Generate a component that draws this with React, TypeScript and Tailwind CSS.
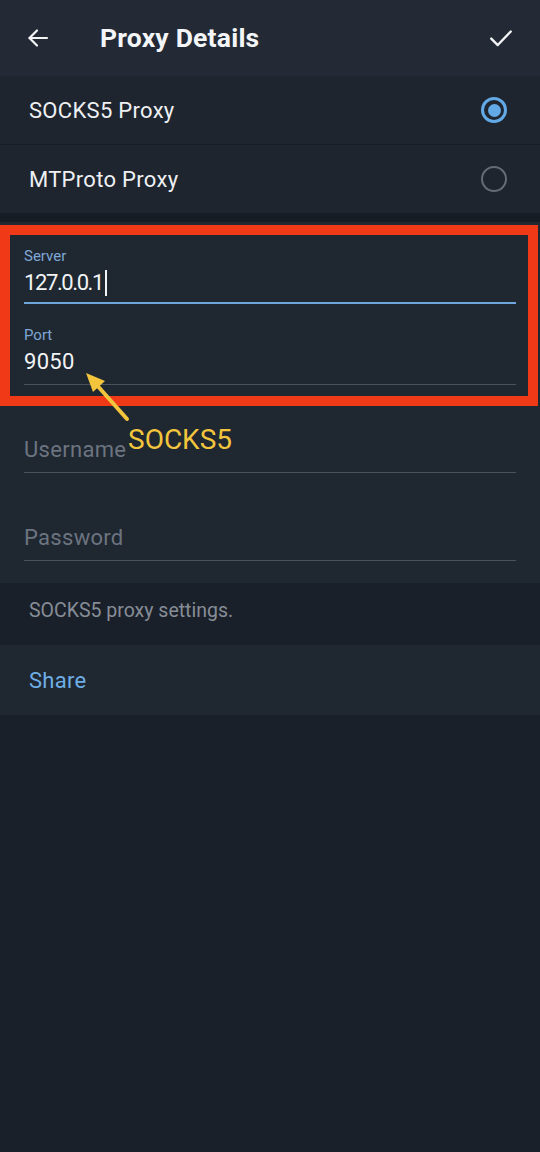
import React from "react";

function Radio({ checked }: { checked: boolean }) {
  if (checked) {
    return (
      <div className="w-[26px] h-[26px] rounded-full border-[3px] border-[#62a9e6] flex items-center justify-center">
        <div className="w-[13px] h-[13px] rounded-full bg-[#62a9e6]" />
      </div>
    );
  }
  return <div className="w-[26px] h-[26px] rounded-full border-[2.5px] border-[#646c77]" />;
}

function Field({
  label,
  value,
  placeholder,
  active,
  height,
  pb,
  cursor,
  tight,
}: {
  label?: string;
  value?: string;
  placeholder?: string;
  active?: boolean;
  height: string;
  pb: string;
  cursor?: boolean;
  tight?: boolean;
}) {
  return (
    <div className={`${height} mx-6 flex flex-col justify-end ${active ? "border-b-2 border-[#6fa6de]" : "border-b border-[#4a525d]"}`}>
      {label && <div className="text-[15px] leading-[18px] text-[#7fa8d6] mb-[4px]">{label}</div>}
      <div className={`text-[22px] leading-[28px] ${pb} ${value ? "text-[#f1f3f5]" : "text-[#6c7480]"} flex items-center`}>
        <span className={tight ? "tracking-[-1.4px]" : "tracking-[0.3px]"}>{value ?? placeholder}</span>
        {cursor && <span className="inline-block w-[2px] h-[26px] bg-[#f1f3f5] ml-[2px]" />}
      </div>
    </div>
  );
}

export default function App() {
  return (
    <div className="relative w-[540px] min-h-[1152px] bg-[#19202a] font-['Roboto','Noto_Sans',sans-serif]">
      {/* toolbar */}
      <header className="h-[76px] bg-[#232a35] flex items-center px-[26px]">
        <svg width="24" height="24" viewBox="0 0 24 24" fill="none" stroke="#f1f3f5" strokeWidth="2.2" strokeLinecap="round" strokeLinejoin="round">
          <path d="M21 12H3.5" />
          <path d="M11 4.5 3.5 12l7.5 7.5" />
        </svg>
        <h1 className="ml-[50px] text-[26.5px] font-bold text-[#f4f5f7] leading-none tracking-[0.2px]">Proxy Details</h1>
        <svg className="ml-auto" width="26" height="26" viewBox="0 0 24 24" fill="none" stroke="#f1f3f5" strokeWidth="2.2" strokeLinecap="round" strokeLinejoin="round">
          <path d="M3 12.5 9 18.5 21 6" />
        </svg>
      </header>

      {/* proxy type */}
      <section className="bg-[#1e252f]">
        <div className="h-[69px] flex items-center justify-between pl-[29px] pr-[33px] border-b border-[#171d25]">
          <span className="text-[22px] text-[#eef0f3] tracking-[0.3px]">SOCKS5 Proxy</span>
          <Radio checked />
        </div>
        <div className="h-[68px] flex items-center justify-between pl-[29px] pr-[33px]">
          <span className="text-[22px] text-[#eef0f3] tracking-[0.3px]">MTProto Proxy</span>
          <Radio checked={false} />
        </div>
      </section>

      <div className="h-[9px] bg-[#161c24]" />

      {/* fields */}
      <section className="bg-[#1f2731] pb-[22px]">
        <Field label="Server" value="127.0.0.1" active cursor tight height="h-[82px]" pb="pb-[5px]" />
        <Field label="Port" value="9050" height="h-[81px]" pb="pb-[8px]" />
        <Field placeholder="Username" height="h-[88px]" pb="pb-[8px]" />
        <Field placeholder="Password" height="h-[88px]" pb="pb-[8px]" />
      </section>

      {/* info */}
      <div className="h-[62px] bg-[#1a2029] flex items-center pl-[29px] pb-[6px]">
        <span className="text-[19.5px] text-[#868d97]">SOCKS5 proxy settings.</span>
      </div>

      <div className="h-[70px] bg-[#1f2731] flex items-center pl-[29px]">
        <span className="text-[22px] text-[#6eaee6] tracking-[0.3px]">Share</span>
      </div>

      {/* annotation overlay */}
      <div className="absolute left-0 top-[225px] w-[538px] h-[181px] border-[10px] border-[#f03a17]" />
      <svg className="absolute left-0 top-0 pointer-events-none" width="540" height="460" viewBox="0 0 540 460">
        <line x1="127" y1="419" x2="95" y2="383" stroke="#f2c53d" strokeWidth="4" strokeLinecap="round" />
        <polygon points="86,373 105,381 93,392" fill="#f2c53d" />
      </svg>
      <div className="absolute left-[128px] top-[422px] text-[28px] leading-[36px] text-[#f2c53d]">SOCKS5</div>
    </div>
  );
}
